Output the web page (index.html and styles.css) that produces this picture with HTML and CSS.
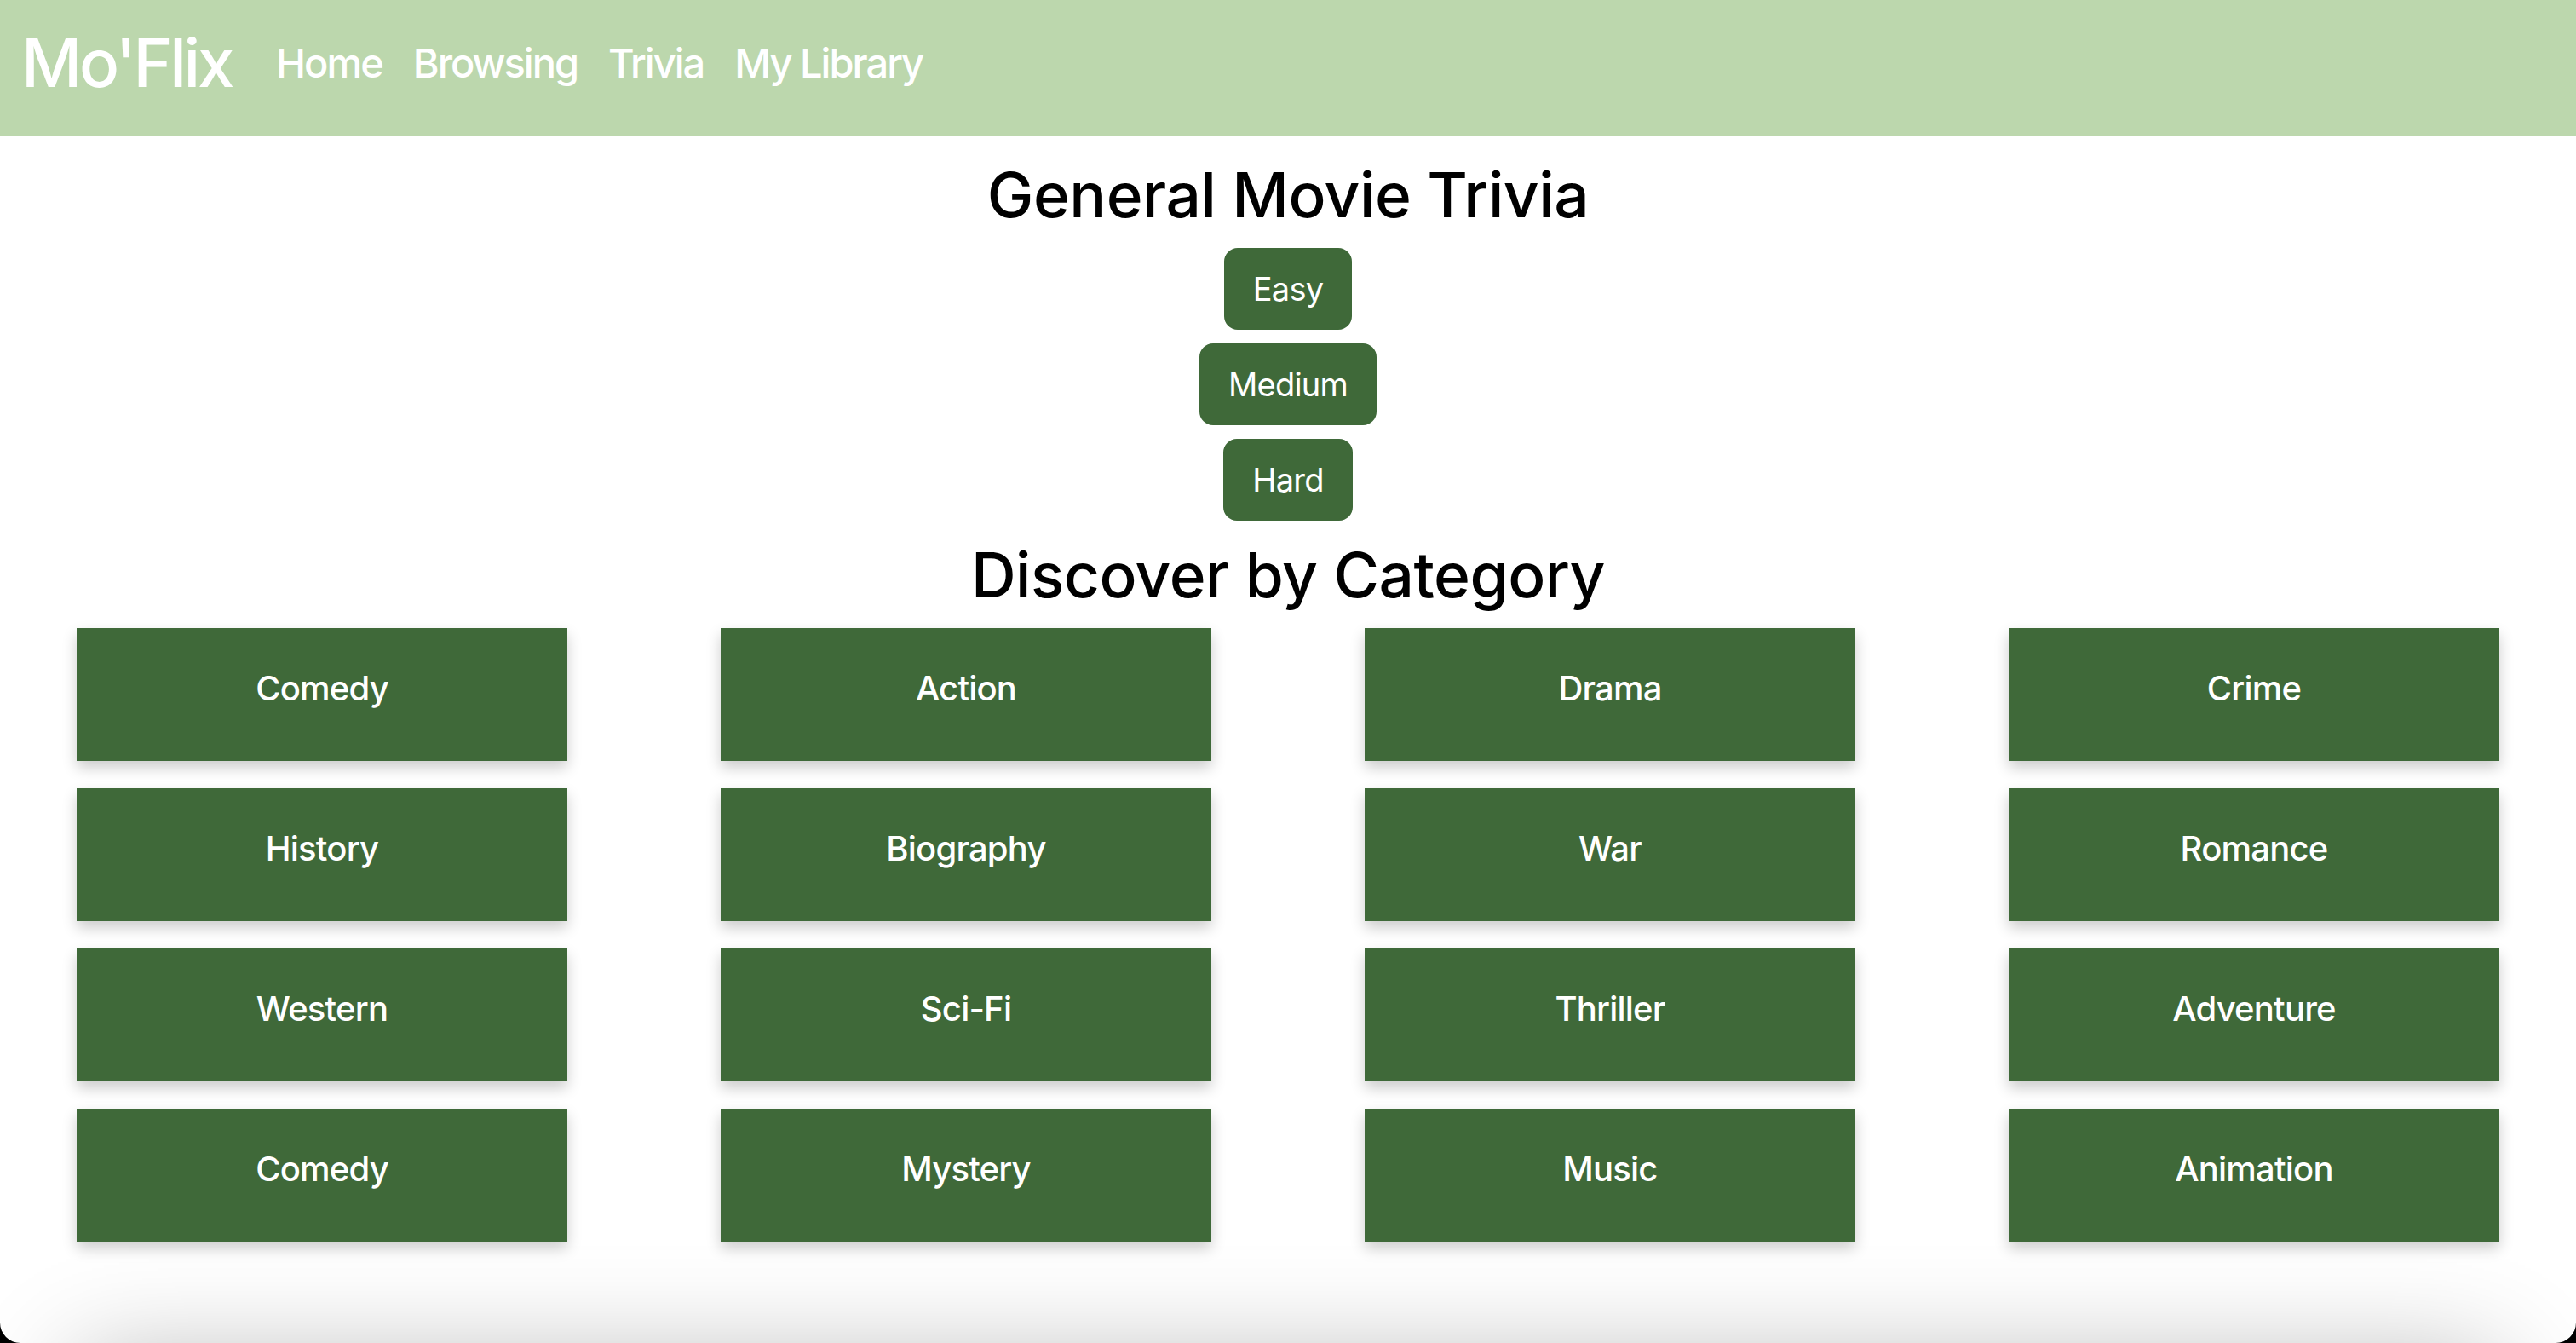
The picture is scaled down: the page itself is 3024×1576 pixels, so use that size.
FILE: index.html
```html
<!DOCTYPE html>
<html lang="en">
<head>
    <meta charset="UTF-8">
    <meta name="viewport" content="width=device-width, initial-scale=1.0">
    <title>Mo'Flix - Trivia</title>
    <link rel="stylesheet" href="styles.css">
</head>
<body>
    <nav class="navbar">
        <a class="brand" href="#">Mo'Flix</a>
        <div class="nav-links">
            <a href="#">Home</a>
            <a href="#">Browsing</a>
            <a href="#">Trivia</a>
            <a href="#">My Library</a>
        </div>
    </nav>

    <main>
        <h1 class="title">General Movie Trivia</h1>
        <div class="levels">
            <button class="btn">Easy</button>
            <button class="btn">Medium</button>
            <button class="btn">Hard</button>
        </div>

        <h2 class="title">Discover by Category</h2>
        <div class="categories">
            <a class="category" href="#">Comedy</a>
            <a class="category" href="#">Action</a>
            <a class="category" href="#">Drama</a>
            <a class="category" href="#">Crime</a>
            <a class="category" href="#">History</a>
            <a class="category" href="#">Biography</a>
            <a class="category" href="#">War</a>
            <a class="category" href="#">Romance</a>
            <a class="category" href="#">Western</a>
            <a class="category" href="#">Sci-Fi</a>
            <a class="category" href="#">Thriller</a>
            <a class="category" href="#">Adventure</a>
            <a class="category" href="#">Comedy</a>
            <a class="category" href="#">Mystery</a>
            <a class="category" href="#">Music</a>
            <a class="category" href="#">Animation</a>
        </div>

        <div class="more"></div>
    </main>
</body>
</html>
```

FILE: styles.css
```css
html {
    background-color: #000;
}
body {
    font-family: Inter, "Noto Sans", sans-serif;
    margin: 0;
    height: 100vh;
    overflow: hidden;
    background-color: #fff;
    border-radius: 0 0 24px 24px;
}
a {
    text-decoration: none;
}
.navbar {
    display: flex;
    align-items: center;
    height: 160px;
    box-sizing: border-box;
    padding: 0 0 14px 25px;
    background-color: #bcd7ad;
}
.brand {
    color: #fff;
    font-size: 78px;
    font-weight: 500;
    letter-spacing: -3.3px;
}
.nav-links {
    display: flex;
    gap: 36px;
    margin-left: 52px;
}
.nav-links a {
    color: #fff;
    font-size: 47px;
    font-weight: 500;
    letter-spacing: -2px;
}
.title {
    text-align: center;
    font-size: 73px;
    font-weight: 500;
    line-height: 0.9;
    letter-spacing: -0.5px;
    margin: 0;
}
h1.title {
    margin: 36px 0 29px;
}
h2.title {
    margin: 31px 0 30px;
}
.levels {
    display: flex;
    flex-direction: column;
    align-items: center;
    gap: 16px;
}
.btn {
    font-family: inherit;
    font-size: 38px;
    line-height: 60px;
    letter-spacing: -0.8px;
    color: #fff;
    background-color: #3f6939;
    border: 2px solid #3f6939;
    border-radius: 16px;
    padding: 16px 32px;
    cursor: pointer;
}
.categories {
    display: grid;
    grid-template-columns: repeat(4, 1fr);
    row-gap: 32px;
}
.category {
    justify-self: center;
    width: 576px;
    height: 156px;
    box-sizing: border-box;
    padding-top: 47px;
    text-align: center;
    color: #fff;
    font-size: 40px;
    font-weight: 500;
    line-height: 1.2;
    letter-spacing: -0.8px;
    background-color: #3f6939;
    box-shadow: 0 8px 16px rgba(0,0,0,0.2);
}
.more {
    height: 400px;
    margin: 142px 91px 0;
    background-color: #fff;
    box-shadow: 0 0 120px rgba(0,0,0,0.3);
}
```
